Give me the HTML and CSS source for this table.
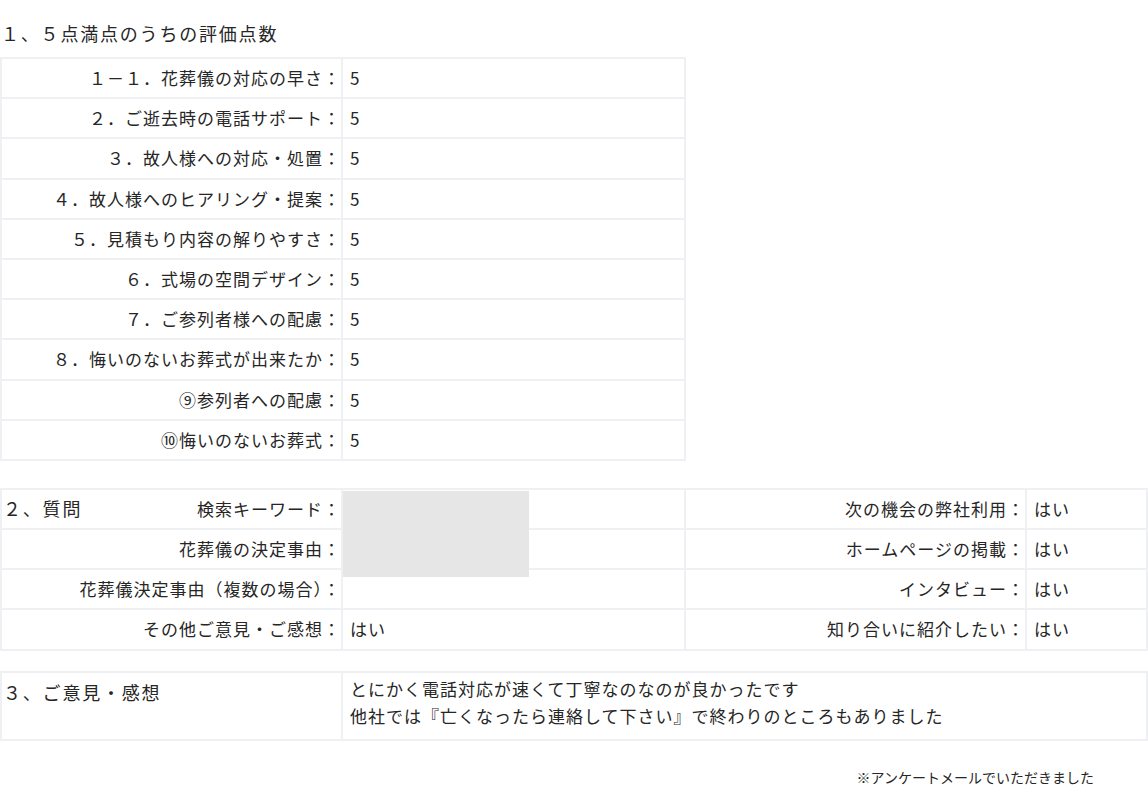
FILE: index.html
```html
<!DOCTYPE html>
<html lang="ja">
<head>
    <meta charset="UTF-8">
    <meta name="viewport" content="width=device-width, initial-scale=1.0">
    <title>アンケート結果</title>

    <link rel="stylesheet" href="styles.css">
</head>
<body>
    <div class="survey">
        <div class="section-title">１、５点満点のうちの評価点数</div>

        <table class="score-table">
            <colgroup>
                <col class="col-label">
                <col class="col-value">
            </colgroup>
            <tr><td class="label">１－１．花葬儀の対応の早さ：</td><td class="value">5</td></tr>
            <tr><td class="label">２．ご逝去時の電話サポート：</td><td class="value">5</td></tr>
            <tr><td class="label">３．故人様への対応・処置：</td><td class="value">5</td></tr>
            <tr><td class="label">４．故人様へのヒアリング・提案：</td><td class="value">5</td></tr>
            <tr><td class="label">５．見積もり内容の解りやすさ：</td><td class="value">5</td></tr>
            <tr><td class="label">６．式場の空間デザイン：</td><td class="value">5</td></tr>
            <tr><td class="label">７．ご参列者様への配慮：</td><td class="value">5</td></tr>
            <tr><td class="label">８．悔いのないお葬式が出来たか：</td><td class="value">5</td></tr>
            <tr><td class="label">⑨参列者への配慮：</td><td class="value">5</td></tr>
            <tr><td class="label">⑩悔いのないお葬式：</td><td class="value">5</td></tr>
        </table>

        <table class="question-table">
            <colgroup>
                <col class="col-label">
                <col class="col-value">
                <col class="col-label2">
                <col>
            </colgroup>
            <tr>
                <td class="label"><span class="inline-title">２、質問</span>検索キーワード：</td>
                <td class="value masked"><div class="mask"></div></td>
                <td class="label">次の機会の弊社利用：</td>
                <td class="value">はい</td>
            </tr>
            <tr>
                <td class="label">花葬儀の決定事由：</td>
                <td class="value"></td>
                <td class="label">ホームページの掲載：</td>
                <td class="value">はい</td>
            </tr>
            <tr>
                <td class="label">花葬儀決定事由（複数の場合）：</td>
                <td class="value"></td>
                <td class="label">インタビュー：</td>
                <td class="value">はい</td>
            </tr>
            <tr>
                <td class="label">その他ご意見・ご感想：</td>
                <td class="value">はい</td>
                <td class="label">知り合いに紹介したい：</td>
                <td class="value">はい</td>
            </tr>
        </table>

        <table class="opinion-table">
            <colgroup>
                <col class="col-label">
                <col>
            </colgroup>
            <tr>
                <td class="opinion-title">３、ご意見・感想</td>
                <td class="opinion-text">とにかく電話対応が速くて丁寧なのなのが良かったです<br>他社では『亡くなったら連絡して下さい』で終わりのところもありました</td>
            </tr>
        </table>

        <p class="note">※アンケートメールでいただきました</p>
    </div>
</body>
</html>
```

FILE: styles.css
```css
body{
    margin: 0;
    background-color: #ffffff;
    color: #262626;
    font-family: "Noto Sans CJK JP", "Noto Sans", sans-serif;
}

.section-title{
    padding: 21px 0 0 1px;
    height: 36px;
    line-height: 24px;
    font-size: 18px;
    letter-spacing: 1.8px;
}

table{
    border-collapse: collapse;
    table-layout: fixed;
}

td{
    border: 2px solid #eef0f4;
    padding: 8px 0 8.2px;
    line-height: 22px;
    font-size: 17px;
    letter-spacing: 1px;
    white-space: nowrap;
}

.col-label{
    width: 341px;
}

.col-value{
    width: 343px;
}

.col-label2{
    width: 341px;
}

td.label{
    text-align: right;
    padding-right: 0;
}

td.value{
    padding-left: 7px;
}

.score-table{
    width: 685px;
    margin-bottom: 27px;
}

.question-table{
    width: 100%;
    margin-bottom: 20px;
}

.inline-title{
    float: left;
    padding-left: 1px;
    font-size: 18px;
    letter-spacing: 1.8px;
    line-height: 20px;
}

.masked{
    position: relative;
}

.mask{
    position: absolute;
    top: 1px;
    left: 0;
    width: 186px;
    height: 86px;
    background-color: #e6e6e6;
    z-index: 1;
}

.opinion-table{
    width: 100%;
}

.opinion-table td{
    vertical-align: top;
}

.opinion-title{
    padding: 6px 0 0 1px;
    font-size: 18px;
    line-height: 26px;
    letter-spacing: 1.8px;
}

.opinion-text{
    padding: 2px 7px 10px;
    line-height: 27px;
}

.note{
    margin: 26px 0 0;
    padding-right: 54px;
    text-align: right;
    font-size: 14px;
    letter-spacing: 0;
}
```
